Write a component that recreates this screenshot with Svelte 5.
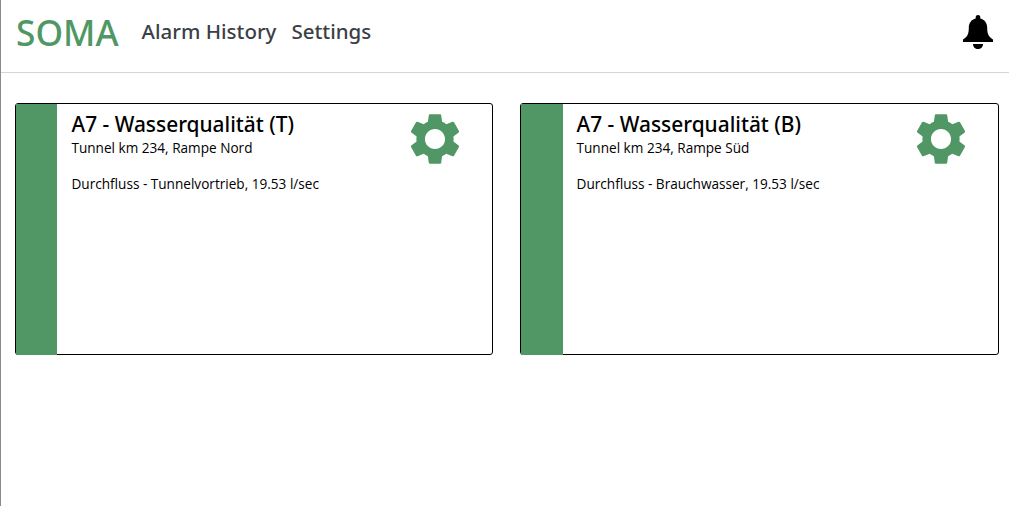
<script lang="ts">
  const cards = [
    { title: 'A7 - Wasserqualität (T)', place: 'Tunnel km 234, Rampe Nord', reading: 'Durchfluss - Tunnelvortrieb, 19.53 l/sec' },
    { title: 'A7 - Wasserqualität (B)', place: 'Tunnel km 234, Rampe Süd', reading: 'Durchfluss - Brauchwasser, 19.53 l/sec' },
  ];
</script>

<div class="page">
  <header class="topbar">
    <span class="brand">SOMA</span>
    <nav class="nav">
      <span>Alarm History</span>
      <span>Settings</span>
    </nav>
    <svg class="bell" viewBox="0 0 30 34" aria-hidden="true">
      <path d="M12.700 2.200C12.700 .9 13.700 0 15 0s2.300 .9 2.300 2.200v1.300c4.200 1 6.900 4.500 6.900 9.200 0 3.400 .4 5.700 1.400 7.500 .9 1.700 2.400 3 4.400 4.300V27H0v-2.500c2-1.300 3.500-2.600 4.400-4.300 1-1.800 1.400-4.100 1.400-7.500 0-4.700 2.700-8.200 6.900-9.200zM10 29h10c0 3-2.200 5-5 5s-5-2-5-5z"/>
    </svg>
  </header>

  <main class="cards">
    {#each cards as card}
      <article class="card">
        <div class="status"></div>
        <div class="body">
          <div class="text">
            <h2>{card.title}</h2>
            <p>{card.place}</p>
            <p class="reading">{card.reading}</p>
          </div>
          <svg class="gear" viewBox="0 0 24 24" aria-hidden="true">
            <path d="M19.14 12.94c.04-.3.06-.61.06-.94 0-.32-.02-.64-.07-.94l2.030-1.580c.18-.14.23-.41.12-.61l-1.920-3.320c-.12-.22-.37-.29-.59-.22l-2.390.96c-.5-.38-1.030-.7-1.620-.94l-.36-2.540c-.04-.24-.24-.41-.48-.41h-3.840c-.24 0-.43.17-.47.41l-.36 2.540c-.59.24-1.130.57-1.620.94l-2.390-.96c-.22-.08-.47 0-.59.22L2.740 8.870c-.12.21-.08.47.12.61l2.030 1.580c-.05.3-.09.63-.09.94s.02.64.07.94l-2.030 1.580c-.18.14-.23.41-.12.61l1.920 3.320c.12.22.37.29.59.22l2.390-.96c.5.38 1.030.7 1.620.94l.36 2.540c.05.24.24.41.48.41h3.840c.24 0 .44-.17.47-.41l.36-2.540c.59-.24 1.130-.56 1.620-.94l2.390.96c.22.08.47 0 .59-.22l1.920-3.320c.12-.22.07-.47-.12-.61l-2.010-1.580zM12 15.900c-2.150 0-3.900-1.750-3.900-3.900s1.750-3.900 3.900-3.900 3.900 1.750 3.900 3.900-1.750 3.900-3.900 3.900z"/>
          </svg>
        </div>
      </article>
    {/each}
  </main>
</div>

<style>
  :global(body) {
    margin: 0;
    background: #fff;
    font-family: 'Open Sans', 'Noto Sans', sans-serif;
  }

  .page {
    min-height: 506px;
    box-sizing: border-box;
    border-left: 1px solid #8a8a8a;
  }

  .topbar {
    display: flex;
    align-items: center;
    height: 72px;
    padding: 0 16px 0 15px;
    border-bottom: 1px solid #d5d5d5;
  }

  .brand {
    font-family: 'Noto Sans', sans-serif;
    font-size: 35.300px;
    font-weight: 500;
    line-height: 1;
    color: #519765;
    margin: -6px 23px 0 0;
  }

  .nav {
    display: flex;
    gap: 15px;
    margin-top: -10px;
    font-family: 'Noto Sans', sans-serif;
    font-size: 20.500px;
    font-weight: 500;
    line-height: 1;
    color: #3a4045;
  }

  .bell {
    width: 30px;
    height: 34px;
    margin: -8px 0 0 auto;
  }

  .cards {
    display: grid;
    grid-template-columns: 478px 479px;
    gap: 27px;
    padding: 30px 10px 0 14px;
  }

  .card {
    display: flex;
    height: 252px;
    box-sizing: border-box;
    border: 1px solid #000;
    border-radius: 3px;
  }

  .status {
    width: 8.71%;
    margin-bottom: -1px;
    background: #519765;
  }

  .body {
    flex: 1;
    display: flex;
    justify-content: space-between;
    padding: 5px 26px 0 14px;
  }

  h2 {
    margin: 0;
    font-family: 'Noto Sans', sans-serif;
    font-size: 20.900px;
    font-weight: 500;
    line-height: 30px;
    color: #000;
  }

  p {
    margin: 0;
    font-size: 13.600px;
    line-height: 18px;
    color: #000;
  }

  .reading {
    margin-top: 18px;
  }

  .gear {
    width: 62px;
    height: 62px;
    margin-top: -1px;
    fill: #519765;
  }
</style>
